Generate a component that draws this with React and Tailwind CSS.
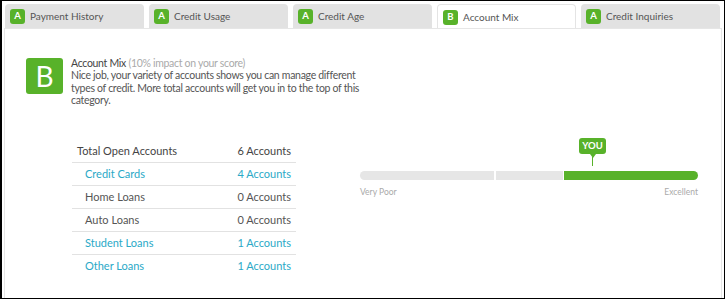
import React from "react";

const tabs = [
  { grade: "A", label: "Payment History" },
  { grade: "A", label: "Credit Usage" },
  { grade: "A", label: "Credit Age" },
  { grade: "B", label: "Account Mix", active: true },
  { grade: "A", label: "Credit Inquiries" },
];

const rows = [
  { label: "Credit Cards", value: "4 Accounts", link: true },
  { label: "Home Loans", value: "0 Accounts" },
  { label: "Auto Loans", value: "0 Accounts" },
  { label: "Student Loans", value: "1 Accounts", link: true },
  { label: "Other Loans", value: "1 Accounts", link: true },
];

export default function App() {
  return (
    <div
      className="w-[725px] h-[299px] bg-white border border-black border-l-2 overflow-hidden text-[#555]"
      style={{ fontFamily: "Lato, 'Open Sans', sans-serif" }}
    >
      <div className="h-full px-[2px] flex flex-col">
        {/* tabs */}
        <div className="flex gap-[5px] pt-[3px] px-[1px] border-b border-[#e6e6e6]">
          {tabs.map((t) => (
            <div
              key={t.label}
              className={
                "w-[139px] h-[24px] rounded-t-[4px] flex items-center gap-[5px] pl-[5px] pt-[1px] text-[10px] " +
                (t.active ? "bg-white border border-b-0 border-[#e4e4e4]" : "bg-[#e2e2e2]")
              }
            >
              <span className="w-[15px] h-[15px] rounded-[3px] bg-[#58b22a] text-white text-[9.5px] font-bold flex items-center justify-center">
                {t.grade}
              </span>
              <span className="text-[#555]">{t.label}</span>
            </div>
          ))}
        </div>

        {/* panel */}
        <div className="flex-1 border-x border-[#e6e6e6] pl-[21px] pr-[20px]">
          <div className="flex gap-[8px] pt-[28px]">
            <div className="w-[37px] h-[36px] shrink-0 rounded-[3px] bg-[#58b22a] text-white text-[28px] leading-none flex items-center justify-center mt-[1px]">
              B
            </div>
            <div className="text-[10.5px] leading-[12.3px] tracking-[-0.3px] w-[294px]">
              <div>
                <span className="text-[#444]">Account Mix</span>{" "}
                <span className="text-[#aaa]">(10% impact on your score)</span>
              </div>
              <p>
                Nice job, your variety of accounts shows you can manage different types of credit. More total
                accounts will get you in to the top of this category.
              </p>
            </div>
          </div>

          <div className="flex mt-[35px]">
            {/* table */}
            <div className="w-[224px] ml-[46px] text-[11px]">
              <div className="flex justify-between items-center h-[22px] pl-[5px] pr-[5px] border-b border-[#e2e2e2] text-[#444]">
                <span>Total Open Accounts</span>
                <span>6 Accounts</span>
              </div>
              {rows.map((r, i) => (
                <div
                  key={r.label}
                  className={
                    "flex justify-between items-center h-[23px] pl-[13px] pr-[5px] " +
                    (i < rows.length - 1 ? "border-b border-[#e2e2e2] " : "") +
                    (r.link ? "text-[#2aa9c7]" : "text-[#555]")
                  }
                >
                  <span>{r.label}</span>
                  <span>{r.value}</span>
                </div>
              ))}
            </div>

            {/* meter */}
            <div className="ml-[64px] w-[338px]">
              <div className="relative h-[30px]">
                <div className="absolute left-[219px] -top-[3px] flex flex-col items-center">
                  <div className="bg-[#58b22a] text-white text-[9.5px] font-bold rounded-[3px] w-[27px] h-[16px] flex items-center justify-center">
                    YOU
                  </div>
                  <div className="w-0 h-0 border-x-[3px] border-x-transparent border-t-[4px] border-t-[#58b22a]" />
                  <div className="w-[1px] h-[9px] bg-[#58b22a] -mt-[1px]" />
                </div>
              </div>
              <div className="flex h-[9px]">
                <div className="w-[134px] bg-[#e6e6e6] rounded-l-full" />
                <div className="w-[67px] ml-[2px] bg-[#e6e6e6]" />
                <div className="flex-1 ml-[1px] bg-[#58b22a] rounded-r-full" />
              </div>
              <div className="flex justify-between text-[8.5px] text-[#aaa] mt-[6px]">
                <span>Very Poor</span>
                <span>Excellent</span>
              </div>
            </div>
          </div>
        </div>
      </div>
    </div>
  );
}
